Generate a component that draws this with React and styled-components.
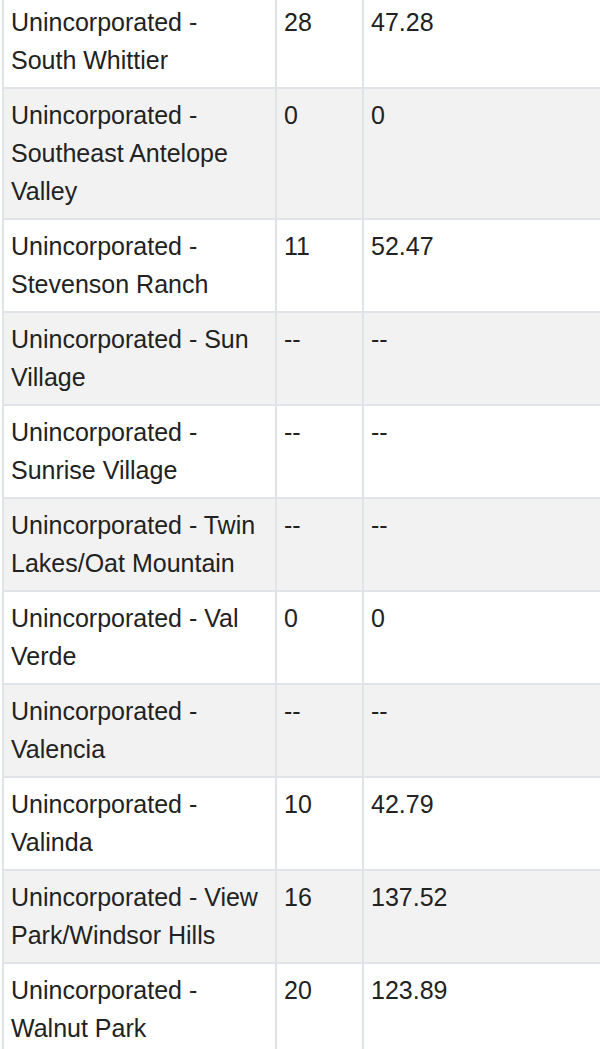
import React from 'react';
import styled, { createGlobalStyle } from 'styled-components';

const GlobalStyle = createGlobalStyle`
  html, body {
    margin: 0;
    padding: 0;
    background: #fff;
    overflow: hidden;
  }
`;

const Page = styled.div`
  width: 600px;
  height: 1049px;
  overflow: hidden;
`;

const Table = styled.table`
  border-collapse: collapse;
  table-layout: fixed;
  width: 640px;
  margin: -6px 0 0 2px;
  font-family: "Liberation Sans", Arial, Helvetica, sans-serif;
  font-size: 25px;
  line-height: 38px;
  color: #222;
`;

const Row = styled.tr`
  background: ${p => (p.$striped ? '#f2f2f2' : '#fff')};
`;

const Cell = styled.td`
  border: 2px solid #e0e3e7;
  padding: 7px 8px 8px 7px;
  vertical-align: top;
  text-align: left;
  overflow-wrap: break-word;
`;

const rows = [
  ['Unincorporated - South Whittier', '28', '47.28'],
  ['Unincorporated - Southeast Antelope Valley', '0', '0'],
  ['Unincorporated - Stevenson Ranch', '11', '52.47'],
  ['Unincorporated - Sun Village', '--', '--'],
  ['Unincorporated - Sunrise Village', '--', '--'],
  ['Unincorporated - Twin Lakes/Oat Mountain', '--', '--'],
  ['Unincorporated - Val Verde', '0', '0'],
  ['Unincorporated - Valencia', '--', '--'],
  ['Unincorporated - Valinda', '10', '42.79'],
  ['Unincorporated - View Park/Windsor Hills', '16', '137.52'],
  ['Unincorporated - Walnut Park', '20', '123.89'],
];

export default function App() {
  return (
    <Page>
      <GlobalStyle />
      <Table>
        <colgroup>
          <col style={{ width: 273 }} />
          <col style={{ width: 87 }} />
          <col />
        </colgroup>
        <tbody>
          {rows.map((r, i) => (
            <Row key={r[0]} $striped={i % 2 === 1}>
              <Cell>{r[0]}</Cell>
              <Cell>{r[1]}</Cell>
              <Cell>{r[2]}</Cell>
            </Row>
          ))}
        </tbody>
      </Table>
    </Page>
  );
}
